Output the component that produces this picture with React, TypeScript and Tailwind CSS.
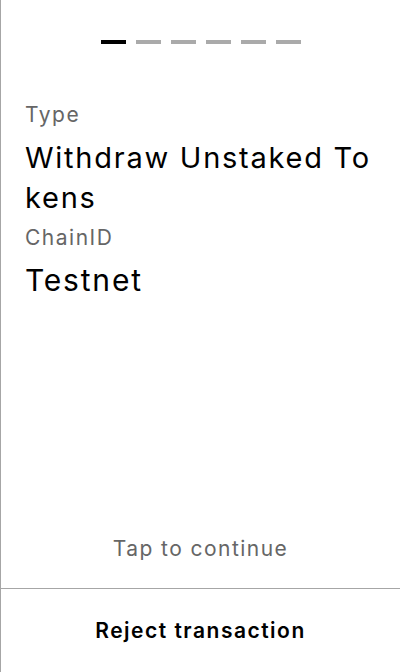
import React from "react";

const steps = [0, 1, 2, 3, 4, 5];

export default function App() {
  const active = 0;
  return (
    <div
      className="flex h-[672px] w-[400px] flex-col border-l border-[#a6a6a6] bg-white text-black"
      style={{ fontFamily: "Inter, 'Noto Sans', sans-serif" }}
    >
      <div className="flex justify-center gap-[10px] pt-10">
        {steps.map((s) => (
          <div
            key={s}
            className={s === active ? "h-1 w-[25px] bg-black" : "h-1 w-[25px] bg-[#aaaaaa]"}
          />
        ))}
      </div>

      <div className="flex flex-col px-6 pt-[57px]">
        <div className="text-[21px] leading-[28px] tracking-[1.5px] text-[#666666]">Type</div>
        <div className="mt-[9px] mb-[6px] break-all text-[29px] leading-[40px] tracking-[1.75px]">
          Withdraw Unstaked Tokens
        </div>
        <div className="text-[21px] leading-[28px] tracking-[1.5px] text-[#666666]">ChainID</div>
        <div className="mt-[8px] break-all text-[30px] leading-[40px] tracking-[1.8px]">Testnet</div>
      </div>

      <div className="flex-1" />

      <button className="pb-[25px] text-center text-[21px] leading-[28px] tracking-[1.45px] text-[#666666]">
        Tap to continue
      </button>

      <button className="h-[84px] border-t border-[#a6a6a6] text-center text-[21px] font-semibold tracking-[1.5px] text-black">
        Reject transaction
      </button>
    </div>
  );
}
